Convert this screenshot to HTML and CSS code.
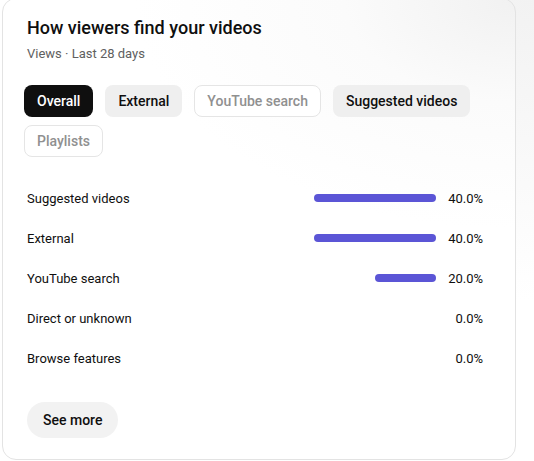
FILE: index.html
```html
<!DOCTYPE html>
<html lang="en">
<head>
<meta charset="utf-8">
<title>How viewers find your videos</title>
<link rel="stylesheet" href="styles.css">
</head>
<body>
<section class="card">
  <header class="card-head">
    <h2 class="title">How viewers find your videos</h2>
    <p class="subtitle">Views · Last 28 days</p>
  </header>
  <div class="chips">
    <button class="chip chip-active">Overall</button>
    <button class="chip chip-filled">External</button>
    <button class="chip chip-disabled">YouTube search</button>
    <button class="chip chip-filled">Suggested videos</button>
    <button class="chip chip-disabled">Playlists</button>
  </div>
  <ul class="rows">
    <li class="row"><span class="label">Suggested videos</span><span class="track"><span class="bar" style="width:100%"></span></span><span class="pct">40.0%</span></li>
    <li class="row"><span class="label">External</span><span class="track"><span class="bar" style="width:100%"></span></span><span class="pct">40.0%</span></li>
    <li class="row"><span class="label">YouTube search</span><span class="track"><span class="bar" style="width:50%"></span></span><span class="pct">20.0%</span></li>
    <li class="row"><span class="label">Direct or unknown</span><span class="track"></span><span class="pct">0.0%</span></li>
    <li class="row"><span class="label">Browse features</span><span class="track"></span><span class="pct">0.0%</span></li>
  </ul>
  <button class="see-more">See more</button>
</section>
</body>
</html>
```

FILE: styles.css
```css
* { box-sizing: border-box; }

html, body {
  margin: 0;
  padding: 0;
  height: 100%;
  overflow: hidden;
}

body {
  font-family: Roboto, "Liberation Sans", Arial, sans-serif;
  color: #0f0f0f;
  background: radial-gradient(ellipse 420px 300px at 100% 0%, #f2f2f2 0%, #ffffff 100%);
}

.card {
  margin: -2px 0 0 2px;
  width: 514px;
  height: 462px;
  border: 1px solid #e3e3e3;
  border-radius: 14px;
  background: radial-gradient(ellipse 380px 230px at 100% 0%, #f1f1f1 0%, #fbfbfb 45%, #ffffff 100%);
  padding: 17px 32px 0 24px;
  display: flex;
  flex-direction: column;
}

.card-head {
  display: flex;
  flex-direction: column;
}

.title {
  margin: 0;
  font-size: 18px;
  line-height: 24px;
  font-weight: 500;
  color: #0f0f0f;
}

.subtitle {
  margin: 5px 0 0;
  font-size: 13px;
  line-height: 18px;
  color: #606060;
}

.chips {
  margin: 22px 0 0 -3px;
  display: flex;
  flex-wrap: wrap;
  gap: 8px 12px;
}

.chip {
  height: 32px;
  padding: 0 12px;
  border-radius: 8px;
  border: 1px solid transparent;
  font-family: inherit;
  font-size: 14px;
  font-weight: 500;
  line-height: 30px;
  cursor: pointer;
}

.chip-active {
  background: #0f0f0f;
  color: #ffffff;
}

.chip-filled {
  background: #efefef;
  color: #0f0f0f;
}

.chip-disabled {
  background: #ffffff;
  border-color: #e5e5e5;
  color: #909090;
}

.rows {
  list-style: none;
  margin: 21px 0 0;
  padding: 0;
  display: flex;
  flex-direction: column;
}

.row {
  height: 40px;
  display: grid;
  grid-template-columns: 1fr 122px 47px;
  align-items: center;
  font-size: 13px;
}

.label {
  color: #0f0f0f;
}

.track {
  height: 8px;
  display: flex;
  justify-content: flex-end;
}

.bar {
  height: 8px;
  border-radius: 4px;
  background: #5b55d6;
}

.pct {
  text-align: right;
  color: #0f0f0f;
}

.see-more {
  align-self: flex-start;
  margin-top: 24px;
  height: 36px;
  padding: 0 16px;
  border: none;
  border-radius: 18px;
  background: #f2f2f2;
  font-family: inherit;
  font-size: 14px;
  font-weight: 500;
  color: #0f0f0f;
  cursor: pointer;
}
```
